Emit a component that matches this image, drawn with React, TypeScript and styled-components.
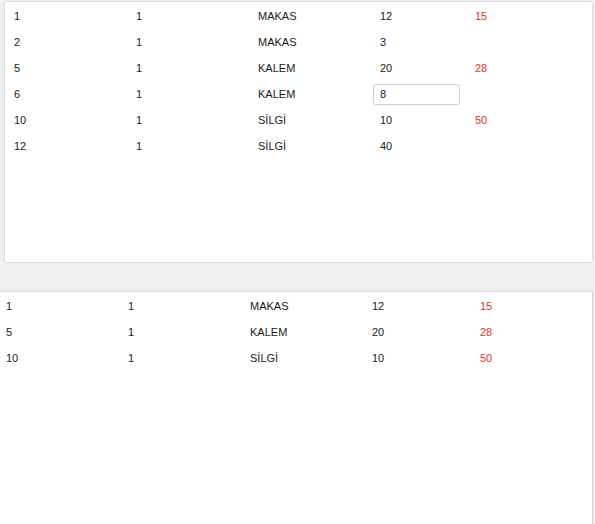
import React from 'react'
import styled, { createGlobalStyle } from 'styled-components'

const GlobalStyle = createGlobalStyle`
  html, body {
    margin: 0;
    padding: 0;
    background: #efefef;
  }
  body {
    font-family: "Liberation Sans", Arial, sans-serif;
    font-size: 11px;
    color: #1a1a1a;
  }
`

const Page = styled.div`
  width: 593px;
  height: 524px;
  display: flex;
  flex-direction: column;
  overflow: hidden;
`

const TopPanel = styled.div`
  margin: 1px 0 0 4px;
  height: 259px;
  background: #fff;
  border: 1px solid #dcdcdc;
  border-radius: 3px;
  padding: 1px 0 0 9px;
`

const BottomPanel = styled.div`
  margin-top: 28px;
  flex: 1;
  background: #fff;
  border-top: 1px solid #dcdcdc;
  border-right: 1px solid #d4d4d4;
  padding: 1px 0 0 6px;
`

const Row = styled.div<{ $last: number }>`
  display: grid;
  grid-template-columns: 122px 122px 122px ${p => p.$last}px 1fr;
  height: 26px;
  align-items: center;
`

const Cell = styled.div<{ $red?: boolean }>`
  color: ${p => (p.$red ? '#dd3333' : '#1a1a1a')};
  white-space: nowrap;
`

const Edit = styled.input`
  box-sizing: border-box;
  margin-left: -7px;
  width: 87px;
  height: 21px;
  border: 1px solid #cfcfcf;
  border-radius: 3px;
  padding: 0 6px;
  font-family: "Liberation Sans", Arial, sans-serif;
  font-size: 11px;
  color: #1a1a1a;
  outline: none;
`

type Item = { id: string; qty: string; name: string; count: string; total?: string; editing?: boolean }

const topRows: Item[] = [
  { id: '1', qty: '1', name: 'MAKAS', count: '12', total: '15' },
  { id: '2', qty: '1', name: 'MAKAS', count: '3' },
  { id: '5', qty: '1', name: 'KALEM', count: '20', total: '28' },
  { id: '6', qty: '1', name: 'KALEM', count: '8', editing: true },
  { id: '10', qty: '1', name: 'SİLGİ', count: '10', total: '50' },
  { id: '12', qty: '1', name: 'SİLGİ', count: '40' },
]

const bottomRows: Item[] = [
  { id: '1', qty: '1', name: 'MAKAS', count: '12', total: '15' },
  { id: '5', qty: '1', name: 'KALEM', count: '20', total: '28' },
  { id: '10', qty: '1', name: 'SİLGİ', count: '10', total: '50' },
]

const ItemRow = ({ item, last }: { item: Item; last: number }) => (
  <Row $last={last}>
    <Cell>{item.id}</Cell>
    <Cell>{item.qty}</Cell>
    <Cell>{item.name}</Cell>
    {item.editing ? <Edit defaultValue={item.count} /> : <Cell>{item.count}</Cell>}
    <Cell $red>{item.total}</Cell>
  </Row>
)

export default function App() {
  return (
    <Page>
      <GlobalStyle />
      <TopPanel>
        {topRows.map((r, i) => <ItemRow key={i} item={r} last={95} />)}
      </TopPanel>
      <BottomPanel>
        {bottomRows.map((r, i) => <ItemRow key={i} item={r} last={108} />)}
      </BottomPanel>
    </Page>
  )
}
